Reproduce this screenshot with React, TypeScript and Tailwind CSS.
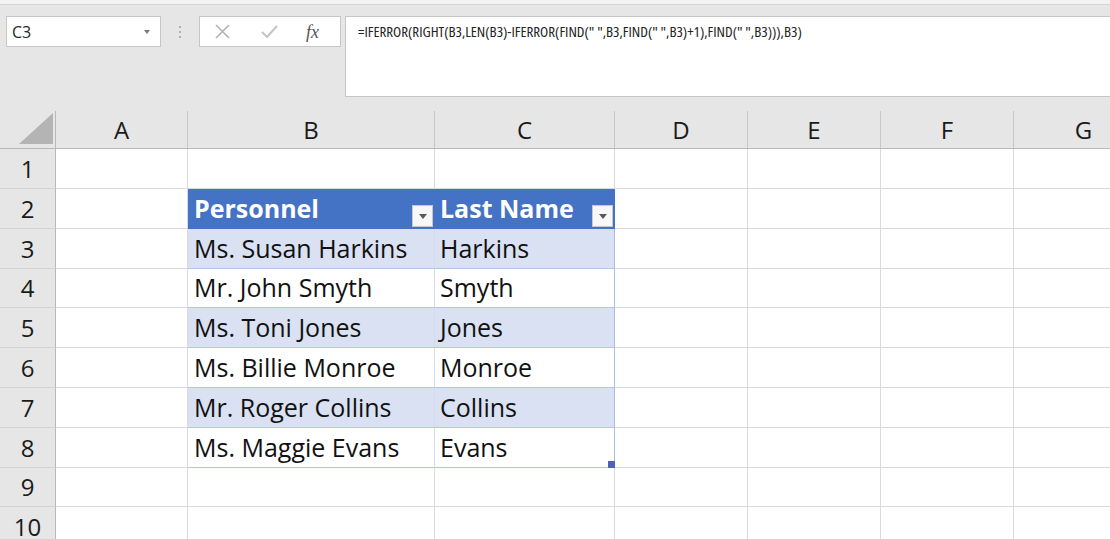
const columns = [
  { label: "A", cls: "w-[132px]" },
  { label: "B", cls: "w-[247px]" },
  { label: "C", cls: "w-[180px]" },
  { label: "D", cls: "w-[133px]" },
  { label: "E", cls: "w-[133px]" },
  { label: "F", cls: "w-[133px]" },
  { label: "G", cls: "w-[140px]" },
];

const people: [string, string][] = [
  ["Ms. Susan Harkins", "Harkins"],
  ["Mr. John Smyth", "Smyth"],
  ["Ms. Toni Jones", "Jones"],
  ["Ms. Billie Monroe", "Monroe"],
  ["Mr. Roger Collins", "Collins"],
  ["Ms. Maggie Evans", "Evans"],
];

function FilterButton() {
  return (
    <span className="mb-[1px] mr-[1px] flex h-[22px] w-[21px] shrink-0 items-center justify-center self-end border border-[#c8c8c8] bg-[#f7f7f7]">
      <svg width="8" height="5" viewBox="0 0 8 5">
        <path d="M0 0h8L4 5z" fill="#595959" />
      </svg>
    </span>
  );
}

function FormulaBar() {
  return (
    <div className="flex h-[106px] items-start pl-[6px] pt-[11px]">
      <div className="flex h-[31px] w-[155px] items-center justify-between border border-[#c6c6c6] bg-white pl-[5px] pr-[10px] text-[16px] text-[#262626]">
        <span>C3</span>
        <svg width="6" height="4" viewBox="0 0 6 4">
          <path d="M0 0h6L3 4z" fill="#7a7a7a" />
        </svg>
      </div>
      <div className="flex h-[31px] w-[38px] flex-col items-center justify-center gap-[3px]">
        <span className="h-[2px] w-[2px] bg-[#b0b0b0]" />
        <span className="h-[2px] w-[2px] bg-[#b0b0b0]" />
        <span className="h-[2px] w-[2px] bg-[#b0b0b0]" />
      </div>
      <div className="flex h-[31px] w-[142px] items-center border border-[#c6c6c6] bg-white pl-[15px]">
        <svg width="15" height="15" viewBox="0 0 15 15" className="mr-[31px]">
          <path d="M1 1L14 14M14 1L1 14" stroke="#b3b3b3" strokeWidth="1.6" fill="none" />
        </svg>
        <svg width="17" height="13" viewBox="0 0 17 13" className="mr-[28px]">
          <path d="M1 7L6 12L16 1" stroke="#c4c4c4" strokeWidth="2" fill="none" />
        </svg>
        <span className="font-['Liberation_Serif',serif] text-[18px] italic leading-none text-[#555]">fx</span>
      </div>
      <div className="ml-[4px] h-[81px] flex-1 border-y border-l border-[#c6c6c6] bg-white pl-[12px] pt-[3px] font-['Open_Sans',sans-serif] text-[15px] font-stretch-condensed text-[#222]">
        =IFERROR(RIGHT(B3,LEN(B3)-IFERROR(FIND(" ",B3,FIND(" ",B3)+1),FIND(" ",B3))),B3)
      </div>
    </div>
  );
}

function HeaderRow() {
  return (
    <div className="flex h-[38px] border-b border-[#b8b8b8] bg-[#e6e6e6]">
      <div className="flex w-[56px] shrink-0 items-end justify-end border-r border-[#b8b8b8] pb-[4px] pr-[2px]">
        <svg width="34" height="31" viewBox="0 0 34 31">
          <path d="M34 0V31H0z" fill="#b4b4b4" />
        </svg>
      </div>
      {columns.map((c) => (
        <div
          key={c.label}
          className={`${c.cls} flex shrink-0 items-center justify-center border-r border-[#c8c8c8] text-[24px] text-[#1a1a1a]`}
        >
          {c.label}
        </div>
      ))}
    </div>
  );
}

function SheetRow({ n }: { n: number }) {
  const isHeader = n === 2;
  const person = n >= 3 && n <= 8 ? people[n - 3] : null;
  const banded = n === 3 || n === 5 || n === 7;
  const tableBg = isHeader ? "bg-[#4472c4]" : banded ? "bg-[#d9e1f2]" : "bg-white";
  const inTable = isHeader || person !== null;
  const height = n === 4 || n === 9 ? "h-[39px]" : "h-[40px]";

  return (
    <div className={`flex ${height}`}>
      <div className="flex w-[56px] shrink-0 items-center justify-center border-r border-b border-r-[#b8b8b8] border-b-[#d2d2d2] bg-[#e6e6e6] text-[24px] text-[#1a1a1a]">
        {n}
      </div>
      <div className="w-[132px] shrink-0 border-r border-b border-[#dadada] bg-white" />
      {inTable ? (
        <>
          <div
            className={`flex w-[247px] shrink-0 items-center justify-between border-r border-b pl-[6px] ${tableBg} ${
              isHeader ? "border-r-[#4472c4] border-b-[#4472c4]" : "border-r-[#d4dcec] border-b-[#b4c6e7]"
            }`}
          >
            {isHeader ? (
              <>
                <span className="font-bold text-white">Personnel</span>
                <FilterButton />
              </>
            ) : (
              <span className="text-[#111]">{person![0]}</span>
            )}
          </div>
          <div
            className={`relative flex w-[180px] shrink-0 items-center justify-between border-r border-b pl-[5px] ${tableBg} ${
              isHeader ? "border-r-[#4472c4] border-b-[#4472c4]" : "border-r-[#a9bbe0] border-b-[#b4c6e7]"
            }`}
          >
            {isHeader ? (
              <>
                <span className="font-bold text-white">Last Name</span>
                <FilterButton />
              </>
            ) : (
              <span className="text-[#111]">{person![1]}</span>
            )}
            {n === 8 && <span className="absolute right-[-1px] bottom-[-1px] h-[7px] w-[7px] bg-[#4a63b8]" />}
          </div>
        </>
      ) : (
        <>
          <div className="w-[247px] shrink-0 border-r border-b border-[#dadada] bg-white" />
          <div className="w-[180px] shrink-0 border-r border-b border-[#dadada] bg-white" />
        </>
      )}
      <div className="w-[133px] shrink-0 border-r border-b border-[#dadada] bg-white" />
      <div className="w-[133px] shrink-0 border-r border-b border-[#dadada] bg-white" />
      <div className="w-[133px] shrink-0 border-r border-b border-[#dadada] bg-white" />
      <div className="w-[140px] shrink-0 border-r border-b border-[#dadada] bg-white" />
    </div>
  );
}

export default function App() {
  return (
    <div className="h-[539px] w-[1110px] overflow-hidden bg-[#e6e6e6] font-['Open_Sans',sans-serif] text-[25px]">
      <div className="h-[5px] border-b border-[#d4d4d4] bg-[#f3f3f3]" />
      <FormulaBar />
      <HeaderRow />
      {[1, 2, 3, 4, 5, 6, 7, 8, 9, 10].map((n) => (
        <SheetRow key={n} n={n} />
      ))}
    </div>
  );
}
